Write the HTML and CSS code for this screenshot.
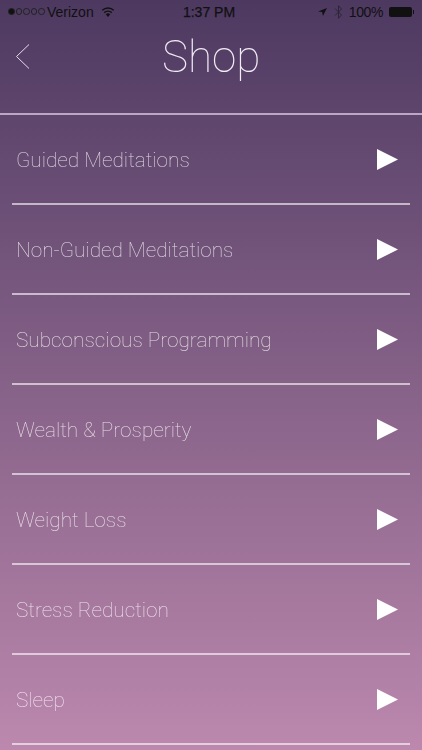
FILE: index.html
```html
<!DOCTYPE html>
<html lang="en">
<head>
<meta charset="utf-8">
<title>Shop</title>
<link rel="stylesheet" href="styles.css">
</head>
<body>
<div class="screen">
  <div class="status">
    <div class="status-left">
      <span class="dots"><i class="dot on"></i><i class="dot"></i><i class="dot"></i><i class="dot"></i><i class="dot"></i></span>
      <span class="carrier">Verizon</span>
      <svg class="wifi" width="14" height="10" viewBox="0 0 15 11"><path d="M7.5 11 5 8a3.6 3.6 0 0 1 5 0z" fill="#111"/><path d="M3.4 6.2a5.9 5.9 0 0 1 8.2 0M1.200 3.600a9 9 0 0 1 12.600 0" fill="none" stroke="#111" stroke-width="1.6"/></svg>
    </div>
    <div class="time">1:37 PM</div>
    <div class="status-right">
      <svg class="loc" width="9" height="8" viewBox="0 0 10 9"><path d="M10 0 0 4l4.600.6.900 4.400z" fill="#111"/></svg>
      <svg class="bt" width="9" height="14" viewBox="0 0 9 14"><path d="M1 3.500 7.500 10 4.500 13.300V.7L7.500 4 1 10.500" fill="none" stroke="#2e2438" stroke-width="1"/></svg>
      <span class="pct">100%</span>
      <span class="battery"></span><span class="nub"></span>
    </div>
  </div>
  <header class="bar">
    <svg class="back" width="16" height="26" viewBox="0 0 16 26"><path d="M14 .5 1.500 12.500 14 24.500" fill="none" stroke="#e6dcea" stroke-width="1"/></svg>
    <h1 class="title">Shop</h1>
  </header>
  <ul class="list">
    <li class="row"><span class="label">Guided Meditations</span><svg class="play" width="21" height="21" viewBox="0 0 21 21"><path d="M0 0 21 10.500 0 21z" fill="#fff"/></svg></li>
    <li class="row"><span class="label">Non-Guided Meditations</span><svg class="play" width="21" height="21" viewBox="0 0 21 21"><path d="M0 0 21 10.500 0 21z" fill="#fff"/></svg></li>
    <li class="row"><span class="label">Subconscious Programming</span><svg class="play" width="21" height="21" viewBox="0 0 21 21"><path d="M0 0 21 10.500 0 21z" fill="#fff"/></svg></li>
    <li class="row"><span class="label">Wealth &amp; Prosperity</span><svg class="play" width="21" height="21" viewBox="0 0 21 21"><path d="M0 0 21 10.500 0 21z" fill="#fff"/></svg></li>
    <li class="row"><span class="label">Weight Loss</span><svg class="play" width="21" height="21" viewBox="0 0 21 21"><path d="M0 0 21 10.500 0 21z" fill="#fff"/></svg></li>
    <li class="row"><span class="label">Stress Reduction</span><svg class="play" width="21" height="21" viewBox="0 0 21 21"><path d="M0 0 21 10.500 0 21z" fill="#fff"/></svg></li>
    <li class="row"><span class="label">Sleep</span><svg class="play" width="21" height="21" viewBox="0 0 21 21"><path d="M0 0 21 10.500 0 21z" fill="#fff"/></svg></li>
  </ul>
</div>
</body>
</html>
```
FILE: styles.css
```css
* { box-sizing: border-box; }
html, body { margin: 0; padding: 0; }
body { width: 422px; height: 750px; overflow: hidden; font-family: Roboto, "Liberation Sans", sans-serif; }
.screen {
  width: 422px; height: 750px; overflow: hidden;
  background: linear-gradient(180deg, #4d3960 0%, #bc88ae 100%);
}
.status {
  height: 23px; display: grid; grid-template-columns: 1fr auto 1fr; align-items: center;
  padding: 0 8px; color: #111; font-family: "Liberation Sans", sans-serif; font-size: 14px;
}
.status-left { display: flex; align-items: center; }
.dots { display: flex; gap: 1px; margin-right: 2.500px; }
.dot { width: 6.500px; height: 6.500px; border-radius: 50%; border: 0.75px solid #222; display: block; }
.dot.on { background: #111; }
.wifi { margin-left: 7px; }
.time { margin-right: 4px; -webkit-text-stroke: 0.25px #111; }
.status-right { display: flex; align-items: center; justify-content: flex-end; }
.loc { margin-right: 7px; }
.bt { margin-right: 6px; }
.pct { margin-right: 6px; letter-spacing: -0.400px; }
.battery { width: 23px; height: 10px; background: #111; border-radius: 2px; display: block; }
.nub { width: 1.500px; height: 4px; background: #111; margin-left: 0.500px; display: block; }
.bar {
  height: 92px; display: flex; align-items: center; justify-content: center; position: relative;
  border-bottom: 2px solid #bba6c6; padding-bottom: 22px;
}
.back { position: absolute; left: 15px; top: 21px; }
.title {
  margin: 0; font-weight: 100; font-size: 44px; line-height: 50px; color: #f2ecf5; will-change: transform;
}
.list { list-style: none; margin: 0; padding: 0 12px; }
.row {
  height: 90px; display: flex; align-items: center; justify-content: space-between;
  border-bottom: 2px solid rgba(255,255,255,0.6); padding: 1px 12px 0 4px;
}
.label { font-weight: 100; font-size: 20.800px; color: rgba(255,255,255,0.78); will-change: transform; }
.play { display: block; }
```
